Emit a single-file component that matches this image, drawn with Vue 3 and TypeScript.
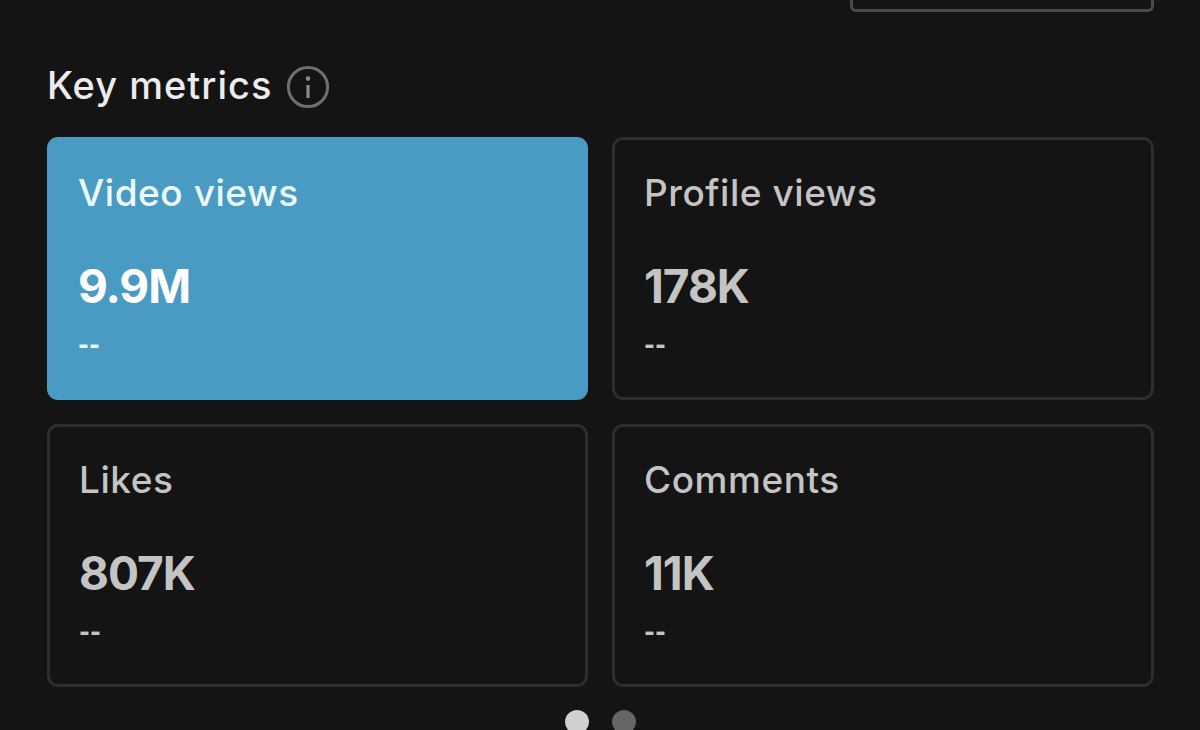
<script setup lang="ts">
interface Metric {
  label: string;
  value: string;
  change: string;
  active?: boolean;
}

const metrics: Metric[] = [
  { label: "Video views", value: "9.9M", change: "--", active: true },
  { label: "Profile views", value: "178K", change: "--" },
  { label: "Likes", value: "807K", change: "--" },
  { label: "Comments", value: "11K", change: "--" },
];
</script>

<template>
  <div class="page">
    <div class="toolbar">
      <div class="range-select"></div>
    </div>

    <div class="heading">
      <h2 class="title">Key metrics</h2>
      <svg class="info" width="44" height="44" viewBox="0 0 44 44" fill="none">
        <circle cx="22" cy="22" r="19.6" stroke="#6f6f6f" stroke-width="3" />
        <circle cx="22" cy="13.6" r="2.3" fill="#8a8a8a" />
        <path d="M22 20v13" stroke="#8a8a8a" stroke-width="3.2" />
      </svg>
    </div>

    <div class="grid">
      <div
        v-for="m in metrics"
        :key="m.label"
        class="card"
        :class="{ active: m.active }"
      >
        <div class="label">{{ m.label }}</div>
        <div class="value">{{ m.value }}</div>
        <div class="change">{{ m.change }}</div>
      </div>
    </div>

    <div class="dots">
      <span class="dot on"></span>
      <span class="dot"></span>
    </div>
  </div>
</template>

<style>
html,
body {
  margin: 0;
  background: #141414;
}
</style>

<style scoped>
.page {
  box-sizing: border-box;
  width: 1200px;
  height: 730px;
  overflow: hidden;
  padding: 0 46px 0 47px;
  background: #141414;
  font-family: Inter, Lato, "Liberation Sans", sans-serif;
}

.toolbar {
  display: flex;
  justify-content: flex-end;
  height: 12px;
}

.range-select {
  box-sizing: border-box;
  width: 304px;
  height: 12px;
  border: 3px solid #4a4a4a;
  border-top: 0;
  border-radius: 0 0 6px 6px;
}

.heading {
  display: flex;
  align-items: center;
  gap: 14px;
  height: 48px;
  margin-top: 51px;
}

.title {
  margin: 0;
  padding-bottom: 4px;
  color: #ececec;
  font-size: 38px;
  font-weight: 500;
  letter-spacing: 1px;
  line-height: 44px;
}

.info {
  flex: none;
}

.grid {
  display: grid;
  grid-template-columns: 541px 542px;
  grid-template-rows: 263px 263px;
  column-gap: 24px;
  row-gap: 24px;
  margin-top: 26px;
}

.card {
  box-sizing: border-box;
  padding: 30px 28px 0 29px;
  border: 3px solid #2e2e2e;
  border-radius: 11px;
  color: #c4c4c4;
}

.card.active {
  border-color: #4a9bc4;
  background: #4a9bc4;
  color: #ecfbff;
  padding-left: 28px;
}

.label {
  font-size: 37px;
  font-weight: 500;
  letter-spacing: 0.55px;
  line-height: 46px;
}

.value {
  margin-top: 46px;
  font-size: 46px;
  font-weight: 700;
  letter-spacing: -1px;
  line-height: 48px;
}

.active .value {
  color: #fff;
}

.change {
  margin-top: 18px;
  font-size: 23px;
  font-weight: 900;
  line-height: 34px;
}

.dots {
  display: flex;
  justify-content: center;
  gap: 23px;
  margin-top: 23px;
  padding-right: 1px;
}

.dot {
  width: 24px;
  height: 24px;
  border-radius: 50%;
  background: #666;
}

.dot.on {
  background: #d0d0d0;
}
</style>
